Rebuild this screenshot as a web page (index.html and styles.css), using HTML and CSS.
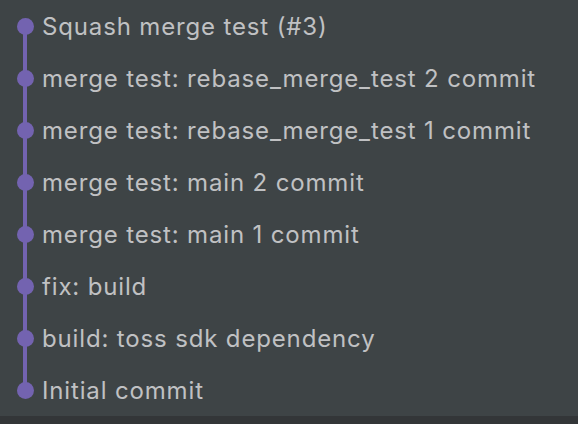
FILE: index.html
```html
<!DOCTYPE html>
<html>
<head>
<meta charset="utf-8">
<link rel="stylesheet" href="styles.css">
</head>
<body>
<div class="page">
  <ul class="log">
    <li class="commit first">Squash merge test (#3)</li>
    <li class="commit">merge test: rebase_merge_test 2 commit</li>
    <li class="commit">merge test: rebase_merge_test 1 commit</li>
    <li class="commit">merge test: main 2 commit</li>
    <li class="commit">merge test: main 1 commit</li>
    <li class="commit">fix: build</li>
    <li class="commit">build: toss sdk dependency</li>
    <li class="commit last">Initial commit</li>
  </ul>
  <div class="statusbar"></div>
</div>
</body>
</html>
```
FILE: styles.css
```css
html, body {
  margin: 0;
  padding: 0;
  background: #3e4446;
}
.page {
  width: 578px;
  height: 424px;
  display: flex;
  flex-direction: column;
  overflow: hidden;
}
.log {
  list-style: none;
  margin: 0;
  padding: 0;
  flex: 0 0 416px;
}
.commit {
  position: relative;
  height: 52px;
  display: flex;
  align-items: center;
  padding-left: 42px;
  font-family: Inter, "Open Sans", sans-serif;
  font-size: 24px;
  color: #c0c1c3;
  letter-spacing: 0.85px;
  white-space: nowrap;
}
.commit::before {
  content: "";
  position: absolute;
  left: 23px;
  width: 4px;
  top: 0;
  bottom: 0;
  background: #7363b0;
}
.commit.first::before { top: 26px; }
.commit.last::before { bottom: 26px; }
.commit::after {
  content: "";
  position: absolute;
  left: 16.5px;
  top: 17.5px;
  width: 17px;
  height: 17px;
  border-radius: 50%;
  background: #7363b0;
}
.statusbar {
  flex: 1;
  background: #333638;
}
```
